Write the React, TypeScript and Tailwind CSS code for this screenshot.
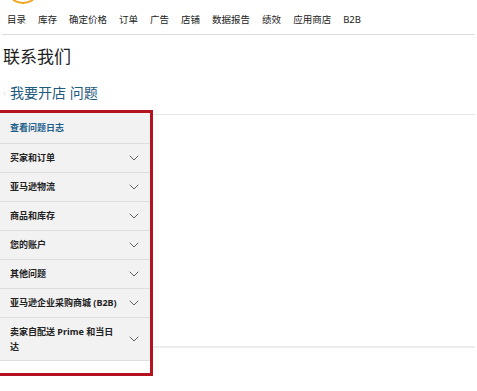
import { ChevronDown, ChevronLeft } from 'lucide-react';

const NAV = ['目录', '库存', '确定价格', '订单', '广告', '店铺', '数据报告', '绩效', '应用商店', 'B2B'];

const TOPICS = [
    '买家和订单',
    '亚马逊物流',
    '商品和库存',
    '您的账户',
    '其他问题',
    '亚马逊企业采购商城 (B2B)',
];

export default function App() {
    return (
        <div
            className="w-[477px] h-[391px] bg-white overflow-hidden text-[#222]"
            style={{ fontFamily: '"Noto Sans", "Noto Sans CJK SC", sans-serif' }}
        >
            {/* Logo smile */}
            <div className="h-[5px] pl-[12px]">
                <svg width="22" height="5" viewBox="0 0 22 5">
                    <path d="M1 0 Q11 6 21 0" stroke="#f0a31a" strokeWidth="2" fill="none" />
                </svg>
            </div>

            {/* Top nav */}
            <nav className="flex items-center gap-[12px] h-[29px] pl-[7px] pt-[1px] text-[9.5px] leading-none">
                {NAV.map((item) => (
                    <span key={item}>{item}</span>
                ))}
            </nav>
            <div className="mx-[2px] h-px bg-[#dcdcdc]" />

            {/* Title */}
            <h1 className="mt-[12px] pl-[3px] text-[17px] leading-[20px] font-normal text-[#1d1d1d]">联系我们</h1>

            {/* Breadcrumb */}
            <div className="mt-[18px] flex items-center h-[16px]">
                <ChevronLeft className="w-[7px] h-[7px] text-[#c4c4c4] ml-[1px]" strokeWidth={2} />
                <span className="ml-[2px] text-[14px] leading-none text-[#1e5b7e]">我要开店 问题</span>
            </div>

            {/* Body */}
            <div className="mt-[9px] flex">
                <div className="w-[153px] h-[266px] border-t-[3px] border-r-[3px] border-b-[3px] border-[#b5121f] bg-white">
                    <div className="bg-[#f3f2f2]">
                        <div className="h-[31px] flex items-center pl-[10px] border-b border-[#dedede] text-[9px] font-bold text-[#1f5f8c]">
                            查看问题日志
                        </div>
                        {TOPICS.map((t) => (
                            <div
                                key={t}
                                className="h-[29px] flex items-center justify-between pl-[10px] pr-[8px] border-b border-[#dedede] text-[9px] font-bold text-[#222]"
                            >
                                <span>{t}</span>
                                <ChevronDown className="w-[16px] h-[16px] text-[#555]" strokeWidth={1.4} />
                            </div>
                        ))}
                        <div className="h-[43px] flex items-center justify-between pl-[10px] pr-[8px] border-b border-[#dedede] text-[9px] font-bold text-[#222]">
                            <span className="w-[106px] leading-[15px]">卖家自配送 Prime 和当日达</span>
                            <ChevronDown className="w-[16px] h-[16px] text-[#555]" strokeWidth={1.4} />
                        </div>
                    </div>
                </div>
                <div className="flex-1 pt-[4px] pr-[2px]">
                    <div className="h-px bg-[#e6e6e6]" />
                    <div className="h-[231px]" />
                    <div className="h-[2px] bg-[#ededed]" />
                </div>
            </div>
        </div>
    );
}
